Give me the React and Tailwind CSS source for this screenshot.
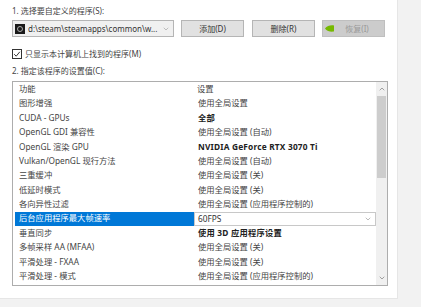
import { ChevronDown, ChevronUp } from 'lucide-react'

const FONT = { fontFamily: '"Noto Sans", "Noto Sans CJK SC", sans-serif' }

const ROWS = [
  { name: '图形增强', value: '使用全局设置' },
  { name: 'CUDA - GPUs', value: '全部', bold: true },
  { name: 'OpenGL GDI 兼容性', value: '使用全局设置 (自动)' },
  { name: 'OpenGL 渲染 GPU', value: 'NVIDIA GeForce RTX 3070 Ti', bold: true },
  { name: 'Vulkan/OpenGL 现行方法', value: '使用全局设置 (自动)' },
  { name: '三重缓冲', value: '使用全局设置 (关)' },
  { name: '低延时模式', value: '使用全局设置 (关)' },
  { name: '各向异性过滤', value: '使用全局设置 (应用程序控制的)' },
  { name: '后台应用程序最大帧速率', value: '60FPS', selected: true },
  { name: '垂直同步', value: '使用 3D 应用程序设置', bold: true },
  { name: '多帧采样 AA (MFAA)', value: '使用全局设置 (关)' },
  { name: '平滑处理 - FXAA', value: '使用全局设置 (关)' },
  { name: '平滑处理 - 模式', value: '使用全局设置 (应用程序控制的)' },
]

function Btn({ children, disabled }) {
  return (
    <div className={`h-[17px] w-[63px] flex items-center justify-center border text-[8px] ${disabled ? 'bg-[#cccccc] border-[#bfbfbf] text-[#9a9a9a]' : 'bg-[#e1e1e1] border-[#b5b5b5] text-[#333]'}`}>
      {children}
    </div>
  )
}

export default function App() {
  return (
    <div className="w-[421px] h-[307px] bg-[#f2f2f2] text-[#444]" style={FONT}>
      <div className="w-[398px] h-[299px] bg-white px-[12px] pt-[5px] border-r border-b border-[#e6e6e6]">
        <div className="text-[8px] h-[12px] leading-[12px]">1. 选择要自定义的程序(S):</div>

        <div className="flex items-center mt-[3px] h-[17px]">
          <div className="w-[165px] h-[17px] flex items-center border border-[#b5b5b5] bg-[#f0f0f0] pl-[2px] pr-[3px]">
            <div className="w-[10px] h-[10px] bg-[#1a1a1a] flex items-center justify-center shrink-0">
              <div className="w-[6px] h-[6px] rounded-full border-[1.5px] border-[#b0b0b0]" />
            </div>
            <span className="ml-[3px] text-[8px] flex-1 truncate text-[#333]">d:\steam\steamapps\common\w...</span>
            <ChevronDown className="w-[8px] h-[8px] text-[#888]" strokeWidth={1.5} />
          </div>
          <div className="ml-[7px]"><Btn>添加(D)</Btn></div>
          <div className="ml-[8px]"><Btn>删除(R)</Btn></div>
          <div className="ml-[7px]">
            <Btn disabled>
              <svg width="9" height="7" viewBox="0 0 9 7" className="mr-auto ml-[2px]">
                <path d="M0 3.5 C2 0.5 6 0 9 0.5 L9 6.5 C6 7 2 6.5 0 3.5 Z" fill="#76b900" />
              </svg>
              <span className="mr-auto -ml-[4px]">恢复(I)</span>
            </Btn>
          </div>
        </div>

        <div className="flex items-center mt-[11px] h-[11px]">
          <div className="w-[10px] h-[10px] border border-[#333] bg-white flex items-center justify-center">
            <svg width="8" height="8" viewBox="0 0 8 8">
              <path d="M1.2 4.2 L3.2 6.2 L6.8 1.8" fill="none" stroke="#333" strokeWidth="1" />
            </svg>
          </div>
          <span className="ml-[3px] text-[8px]">只显示本计算机上找到的程序(M)</span>
        </div>

        <div className="text-[8px] mt-[6px] h-[12px] leading-[12px]">2. 指定该程序的设置值(C):</div>

        <div className="mt-[4px] w-[376px] h-[205px] border border-[#adadad] flex">
          <div className="flex-1 pl-[2px]">
            <div className="flex h-[14.4px] items-center text-[8.3px]">
              <div className="w-[179px] pl-[4px]">功能</div>
              <div className="pl-[3px]">设置</div>
            </div>
            {ROWS.map((r) => (
              <div key={r.name} className="flex h-[14.4px] items-center text-[8.3px]">
                <div className={`w-[179px] h-full flex items-center pl-[4px] ${r.selected ? 'bg-[#0078d7] text-white' : ''}`}>{r.name}</div>
                {r.selected ? (
                  <div className="flex-1 h-full flex items-center border border-[#c8c8c8] pl-[3px] pr-[3px] text-[#333]">
                    <span className="flex-1">{r.value}</span>
                    <ChevronDown className="w-[8px] h-[8px] text-[#777]" strokeWidth={1.5} />
                  </div>
                ) : (
                  <div className={`pl-[4px] ${r.bold ? 'font-bold text-[#222] tracking-[0.2px]' : ''}`}>{r.value}</div>
                )}
              </div>
            ))}
          </div>
          <div className="w-[11px] bg-[#f0f0f0] flex flex-col items-center">
            <ChevronUp className="w-[8px] h-[8px] mt-[3px] text-[#777]" strokeWidth={2} />
            <div className="w-[9px] h-[82px] bg-[#cdcdcd] mt-[3px]" />
            <div className="flex-1" />
            <ChevronDown className="w-[8px] h-[8px] mb-[3px] text-[#777]" strokeWidth={2} />
          </div>
        </div>
      </div>
    </div>
  )
}
